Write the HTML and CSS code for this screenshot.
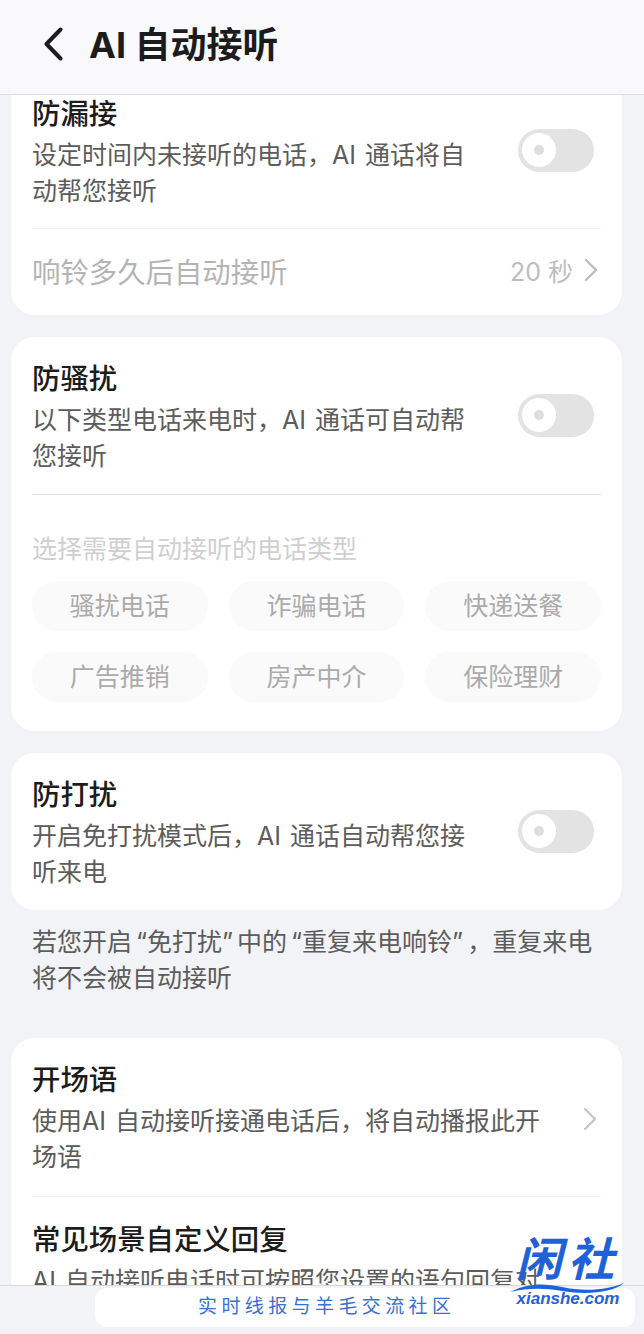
FILE: index.html
```html
<!DOCTYPE html>
<html lang="zh-CN">
<head>
<meta charset="UTF-8" />
<meta name="viewport" content="width=device-width, initial-scale=1" />
<title>AI 自动接听</title>
<link rel="stylesheet" href="styles.css">
</head>
<body>
  <div class="page">
    <header class="topbar">
      <svg class="back" width="20" height="34" viewBox="0 0 20 34"><path d="M17.5 2.5 L3.5 17 L17.5 31.5" fill="none" stroke="#1c1c1c" stroke-width="4" stroke-linecap="round" stroke-linejoin="round"/></svg>
      <h1>AI 自动接听</h1>
    </header>

    <main class="content">
      <section class="card card-first">
        <div class="item">
          <div class="item-text">
            <div class="item-title">防漏接</div>
            <div class="item-desc">设定时间内未接听的电话，AI 通话将自动帮您接听</div>
          </div>
          <div class="toggle"><div class="thumb"></div></div>
        </div>
        <div class="line line-light"></div>
        <div class="row-disabled">
          <span class="row-label">响铃多久后自动接听</span>
          <span class="row-value">20 秒
            <svg width="14" height="24" viewBox="0 0 14 24"><path d="M2 2 L12 12 L2 22" fill="none" stroke="#bdbdbd" stroke-width="2.4" stroke-linecap="round" stroke-linejoin="round"/></svg>
          </span>
        </div>
      </section>

      <section class="card">
        <div class="item">
          <div class="item-text">
            <div class="item-title">防骚扰</div>
            <div class="item-desc">以下类型电话来电时，AI 通话可自动帮您接听</div>
          </div>
          <div class="toggle"><div class="thumb"></div></div>
        </div>
        <div class="line line-dark"></div>
        <div class="chips-label">选择需要自动接听的电话类型</div>
        <div class="chips">
          <div class="chip">骚扰电话</div>
          <div class="chip">诈骗电话</div>
          <div class="chip">快递送餐</div>
          <div class="chip">广告推销</div>
          <div class="chip">房产中介</div>
          <div class="chip">保险理财</div>
        </div>
      </section>

      <section class="card">
        <div class="item">
          <div class="item-text">
            <div class="item-title">防打扰</div>
            <div class="item-desc">开启免打扰模式后，AI 通话自动帮您接听来电</div>
          </div>
          <div class="toggle"><div class="thumb"></div></div>
        </div>
      </section>

      <p class="note">若您开启<span class="q-open">“</span>免打扰<span class="q-close">”</span>中的<span class="q-open">“</span>重复来电响铃<span class="q-close">”</span>，重复来电将不会被自动接听</p>

      <section class="card card-last">
        <div class="item">
          <div class="item-text item-text-wide">
            <div class="item-title">开场语</div>
            <div class="item-desc">使用AI 自动接听接通电话后，将自动播报此开场语</div>
          </div>
          <svg class="chevron" width="14" height="24" viewBox="0 0 14 24"><path d="M2 2 L12 12 L2 22" fill="none" stroke="#c4c4c4" stroke-width="2.2" stroke-linecap="round" stroke-linejoin="round"/></svg>
        </div>
        <div class="line line-light"></div>
        <div class="item">
          <div class="item-text item-text-wide">
            <div class="item-title">常见场景自定义回复</div>
            <div class="item-desc">AI 自动接听电话时可按照您设置的语句回复对方</div>
          </div>
        </div>
      </section>
    </main>

    <footer class="bottombar">
      <div class="slogan">实时线报与羊毛交流社区</div>
    </footer>

    <!-- watermark -->
    <div class="logo">
      <div class="logo-name">闲社</div>
      <svg class="logo-wave" width="114" height="10" viewBox="0 0 114 10"><path d="M0 9 C18 0 34 0 52 4 C74 9 98 7 114 0 C102 10 76 12 52 8 C34 5 18 5 0 9 Z" fill="#1f62d8"/></svg>
      <div class="logo-url">xianshe.com</div>
    </div>
  </div>
</body>
</html>
```

FILE: styles.css
```css
body, html {
  margin: 0; padding: 0; height: 100%;
  font-family: Inter, "Noto Sans CJK SC", sans-serif;
  background: #f2f3f7;
}
.page {
  position: relative;
  width: 644px;
  height: 1334px;
  overflow: hidden;
  display: flex;
  flex-direction: column;
}
.topbar {
  flex: none;
  height: 88px;
  padding: 0 0 6px 43px;
  background: #f9f9fb;
  border-bottom: 1px solid #dcdcde;
  display: flex;
  align-items: center;
  gap: 26px;
}
.back {
  flex: none;
}
.topbar h1 {
  margin: 0 0 4px;
  font-size: 36px;
  font-weight: 700;
  color: #1c1c1c;
}
.content {
  flex: 1;
  min-height: 0;
  overflow: hidden;
  padding: 0 22px 0 11px;
}
.card {
  background: white;
  border-radius: 24px;
  padding: 24px 21px 20px 21px;
  margin-bottom: 22px;
}
.card-first {
  border-radius: 0 0 24px 24px;
  padding-top: 1px;
  padding-bottom: 0;
}
.card-last {
  padding-bottom: 0;
  margin-bottom: 0;
}
.item {
  display: flex;
  align-items: center;
  justify-content: space-between;
}
.item-text {
  max-width: 450px;
}
.item-text-wide {
  max-width: 525px;
}
.item-title {
  font-size: 28.4px;
  line-height: 36px;
  font-weight: 500;
  color: #1c1c1c;
}
.item-desc {
  margin-top: 5px;
  font-size: 25px;
  line-height: 36px;
  word-spacing: 2px;
  color: #5c5c5c;
}
.toggle {
  flex: none;
  width: 76px;
  height: 43px;
  margin: 0 7px 5px 0;
  border-radius: 22px;
  background: #e3e3e3;
  display: flex;
  align-items: center;
  padding-left: 4px;
  box-sizing: border-box;
}
.thumb {
  width: 34px;
  height: 34px;
  border-radius: 50%;
  background: white;
  display: flex;
  align-items: center;
  justify-content: center;
}
.thumb::after {
  content: "";
  width: 10px;
  height: 10px;
  border-radius: 50%;
  background: #dedede;
}
.line {
  height: 1px;
}
.line-light {
  margin-top: 19px;
  background: #f0f0f0;
}
.line-dark {
  margin-top: 20px;
  background: #dcdcdc;
}
.row-disabled {
  height: 86px;
  padding-bottom: 4px;
  box-sizing: border-box;
  display: flex;
  align-items: center;
  justify-content: space-between;
}
.row-label {
  font-size: 28.4px;
  color: #b4b4b4;
}
.row-value {
  display: flex;
  align-items: center;
  gap: 11px;
  margin-right: 3px;
  font-size: 25px;
  color: #bdbdbd;
}
.chips-label {
  margin-top: 36px;
  font-size: 25px;
  line-height: 36px;
  color: #cfcfcf;
}
.chips {
  margin: 14px 0 9px 0;
  display: grid;
  grid-template-columns: repeat(3, 1fr);
  column-gap: 21px;
  row-gap: 21px;
}
.chip {
  height: 50px;
  border-radius: 25px;
  background: #fafafa;
  font-size: 25px;
  line-height: 50px;
  text-align: center;
  color: #ababab;
}
.note {
  margin: -8px 0 42px;
  padding: 0 21px;
  font-size: 25px;
  line-height: 36px;
  color: #5c5c5c;
}
.q-open {
  padding-left: 4px;
}
.q-close {
  padding-right: 4px;
}
.chevron {
  flex: none;
  margin-right: 4px;
}
.card-last .line-light {
  margin-top: 21px;
}
.card-last .line-light + .item {
  margin-top: 25px;
}
.bottombar {
  flex: none;
  height: 49px;
  background: #f2f3f7;
  border-top: 1px solid #d8d8da;
  box-sizing: border-box;
  padding: 2px 9px 8px 95px;
}
.slogan {
  height: 39px;
  background: white;
  border-radius: 12px;
  padding-left: 103px;
  font-size: 19px;
  line-height: 37px;
  letter-spacing: 4.4px;
  color: #3a6fd2;
}
.logo {
  position: absolute;
  left: 510px;
  top: 1236px;
  width: 116px;
  text-align: center;
}
.logo-name {
  font-size: 46px;
  line-height: 47px;
  font-weight: 700;
  font-style: italic;
  letter-spacing: 6px;
  color: #1f62d8;
}
.logo-wave {
  display: block;
}
.logo-url {
  font-family: "Liberation Sans", sans-serif;
  font-size: 17px;
  line-height: 12px;
  font-style: italic;
  font-weight: 700;
  color: #1f62d8;
}
```
